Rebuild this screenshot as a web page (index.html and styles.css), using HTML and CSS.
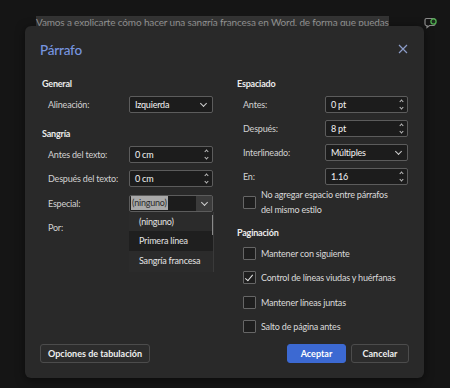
FILE: index.html
```html
<!DOCTYPE html>
<html lang="es">
<head>
<meta charset="UTF-8" />
<meta name="viewport" content="width=device-width, initial-scale=1" />
<title>Párrafo</title>
<link rel="stylesheet" href="styles.css">
</head>
<body>

<div class="doc">
  <p class="doc-line"><span class="sel">Vamos a explicarte cómo hacer una sangría francesa en Word, de forma que puedas</span></p>
  <svg class="comment-icon" width="14" height="12" viewBox="0 0 14 12">
    <path d="M2.5 1.5h7a1.5 1.5 0 0 1 1.5 1.5v4a1.5 1.5 0 0 1-1.5 1.5h-4l-2.5 2v-2h-0.5a1.5 1.5 0 0 1-1.5-1.5v-4a1.5 1.5 0 0 1 1.5-1.5z" fill="none" stroke="#8a8a8a" stroke-width="1.2"/>
    <circle cx="9.5" cy="4.5" r="2.6" fill="#1d2a1d" stroke="#4fae4f" stroke-width="1.3"/>
  </svg>
</div>

<div class="dialog">
  <div class="dlg-head">
    <h1>Párrafo</h1>
    <span class="close">
      <svg width="10" height="10" viewBox="0 0 10 10"><path d="M1 1l8 8M9 1l-8 8" stroke="#8c9cc8" stroke-width="1.2"/></svg>
    </span>
  </div>

  <div class="dlg-body">
    <div class="col col-left">
      <div class="heading">General</div>
      <div class="row">
        <span class="label">Alineación:</span>
        <div class="field select">Izquierda<span class="chev"></span></div>
      </div>

      <div class="heading gap">Sangría</div>
      <div class="row tall">
        <span class="label">Antes del texto:</span>
        <div class="field spin">0 cm<span class="arrows"></span></div>
      </div>
      <div class="row tall">
        <span class="label">Después del texto:</span>
        <div class="field spin">0 cm<span class="arrows"></span></div>
      </div>
      <div class="row tall">
        <span class="label">Especial:</span>
        <div class="field select open">
          <span class="hl">(ninguno)</span>
          <span class="chev-box"><span class="chev"></span></span>
          <ul class="menu">
            <li>(ninguno)</li>
            <li class="hover">Primera línea</li>
            <li>Sangría francesa</li>
          </ul>
        </div>
      </div>
      <div class="row tall">
        <span class="label">Por:</span>
      </div>
    </div>

    <div class="col col-right">
      <div class="heading">Espaciado</div>
      <div class="row">
        <span class="label">Antes:</span>
        <div class="field spin">0 pt<span class="arrows"></span></div>
      </div>
      <div class="row">
        <span class="label">Después:</span>
        <div class="field spin">8 pt<span class="arrows"></span></div>
      </div>
      <div class="row">
        <span class="label">Interlineado:</span>
        <div class="field select">Múltiples<span class="chev"></span></div>
      </div>
      <div class="row">
        <span class="label">En:</span>
        <div class="field spin">1.16<span class="arrows"></span></div>
      </div>
      <label class="check multi"><span class="box"></span><span>No agregar espacio entre párrafos<br>del mismo estilo</span></label>

      <div class="heading gap2">Paginación</div>
      <label class="check"><span class="box"></span><span>Mantener con siguiente</span></label>
      <label class="check"><span class="box checked"></span><span>Control de líneas viudas y huérfanas</span></label>
      <label class="check"><span class="box"></span><span>Mantener líneas juntas</span></label>
      <label class="check"><span class="box"></span><span>Salto de página antes</span></label>
    </div>
  </div>

  <div class="dlg-foot">
    <button class="btn">Opciones de tabulación</button>
    <div class="foot-right">
      <button class="btn primary">Aceptar</button>
      <button class="btn">Cancelar</button>
    </div>
  </div>
</div>

</body>
</html>
```

FILE: styles.css
```css
body {
  margin: 0;
  background: #151515;
  font-family: Lato, "Open Sans", sans-serif;
  color: #d6d6d6;
  width: 450px;
  height: 388px;
  overflow: hidden;
  position: relative;
}
.doc {
  display: flex;
  justify-content: space-between;
  padding: 16px 12px 0 36px;
}
.doc-line {
  margin: 0;
  font-size: 10px;
  letter-spacing: -0.15px;
  line-height: 13px;
  color: #9a9a9a;
  white-space: nowrap;
}
.sel {
  background: #333;
}
.comment-icon {
  margin-top: 1px;
}

.dialog {
  position: absolute;
  left: 25px;
  top: 26px;
  width: 399px;
  height: 352px;
  background: #292929;
  border-radius: 6px;
  box-shadow: 0 2px 10px rgba(0,0,0,0.5);
  display: flex;
  flex-direction: column;
  box-sizing: border-box;
  padding-bottom: 15px;
}
.dlg-head {
  display: flex;
  justify-content: space-between;
  padding: 15px 16px 0 15px;
}
.dlg-head h1 {
  margin: 0;
  font-size: 13.5px;
  letter-spacing: -0.2px;
  line-height: 18px;
  font-weight: 500;
  color: #7896e0;
}
.close {
  margin-top: -3px;
}

.dlg-body {
  display: grid;
  grid-template-columns: 195px 1fr;
  padding: 16px 16px 0 17px;
  font-size: 9px;
  letter-spacing: -0.2px;
  white-space: nowrap;
}
.heading {
  font-weight: bold;
  color: #ececec;
  height: 17px;
  line-height: 17px;
}
.heading.gap { margin-top: 9px; }
.heading.gap2 { margin-top: 7px; }

.row {
  display: flex;
  align-items: center;
  height: 24px;
  padding-left: 6px;
}
.row.tall { height: 24.5px; }
.label {
  color: #d2d2d2;
}
.col-left .label { width: 81px; }
.col-right .label { width: 82px; }

.field {
  position: relative;
  box-sizing: border-box;
  height: 17px;
  line-height: 15px;
  border: 1px solid #5c5c5c;
  border-radius: 2px;
  background: #1c1c1c;
  color: #f4f4f4;
  padding-left: 5px;
}
.col-left .field { width: 84px; }
.col-right .field { width: 83px; }

.chev {
  position: absolute;
  right: 6px;
  top: 4px;
  width: 4px;
  height: 4px;
  border-right: 1px solid #cfcfcf;
  border-bottom: 1px solid #cfcfcf;
  transform: rotate(45deg);
}
.arrows::before,
.arrows::after {
  content: "";
  position: absolute;
  right: 4px;
  width: 2px;
  height: 2px;
  border-left: 1px solid #bdbdbd;
  border-top: 1px solid #bdbdbd;
}
.arrows::before { top: 3px; transform: rotate(45deg); }
.arrows::after { bottom: 3px; transform: rotate(225deg); }

.select.open {
  padding-left: 0;
  display: flex;
}
.hl {
  background: #a9a9a9;
  color: #2a2a2a;
  padding: 0 1px;
  margin-left: 1px;
  height: 14px;
  line-height: 14px;
}
.chev-box {
  margin-left: auto;
  width: 16px;
  background: #3b3b3b;
}
.chev-box .chev { right: 5px; }

.menu {
  position: absolute;
  left: -1px;
  top: 16px;
  width: 84px;
  margin: 0;
  padding: 0 0 2px;
  list-style: none;
  background: #2b2b2b;
  border-right: 1px solid #3a3a3a;
  color: #e4e4e4;
  z-index: 2;
}
.menu::after {
  content: "";
  position: absolute;
  right: 0;
  top: 3px;
  width: 1px;
  height: 20px;
  background: #8a8a8a;
}
.menu li {
  height: 19.5px;
  line-height: 19.5px;
  padding-left: 10px;
}
.menu li.hover {
  background: #1f1f1f;
}

.check {
  display: flex;
  align-items: center;
  height: 24.5px;
  padding-left: 6px;
  color: #dadada;
}
.check.multi {
  height: auto;
  line-height: 14.5px;
  margin-top: 0;
}
.box {
  flex: none;
  box-sizing: border-box;
  width: 13px;
  height: 13px;
  border: 1px solid #666;
  border-radius: 1px;
  background: #1e1e1e;
  margin-right: 5px;
  position: relative;
}
.box.checked::after {
  content: "";
  position: absolute;
  left: 3px;
  top: 1px;
  width: 3px;
  height: 7px;
  border-right: 1px solid #e6e6e6;
  border-bottom: 1px solid #e6e6e6;
  transform: rotate(40deg);
}

.dlg-foot {
  margin-top: auto;
  display: flex;
  justify-content: space-between;
  padding: 0 15px;
}
.foot-right {
  display: flex;
  gap: 5px;
}
.btn {
  font-family: Lato, "Open Sans", sans-serif;
  font-size: 9px;
  font-weight: bold;
  height: 19px;
  padding: 0 7px;
  background: #2c2c2c;
  border: 1px solid #4c4c4c;
  border-radius: 3px;
  color: #efefef;
}
.btn.primary {
  width: 59px;
  background: #3c69d2;
  border-color: #3c69d2;
  color: #fff;
}
.foot-right .btn:last-child {
  width: 58px;
}
```
